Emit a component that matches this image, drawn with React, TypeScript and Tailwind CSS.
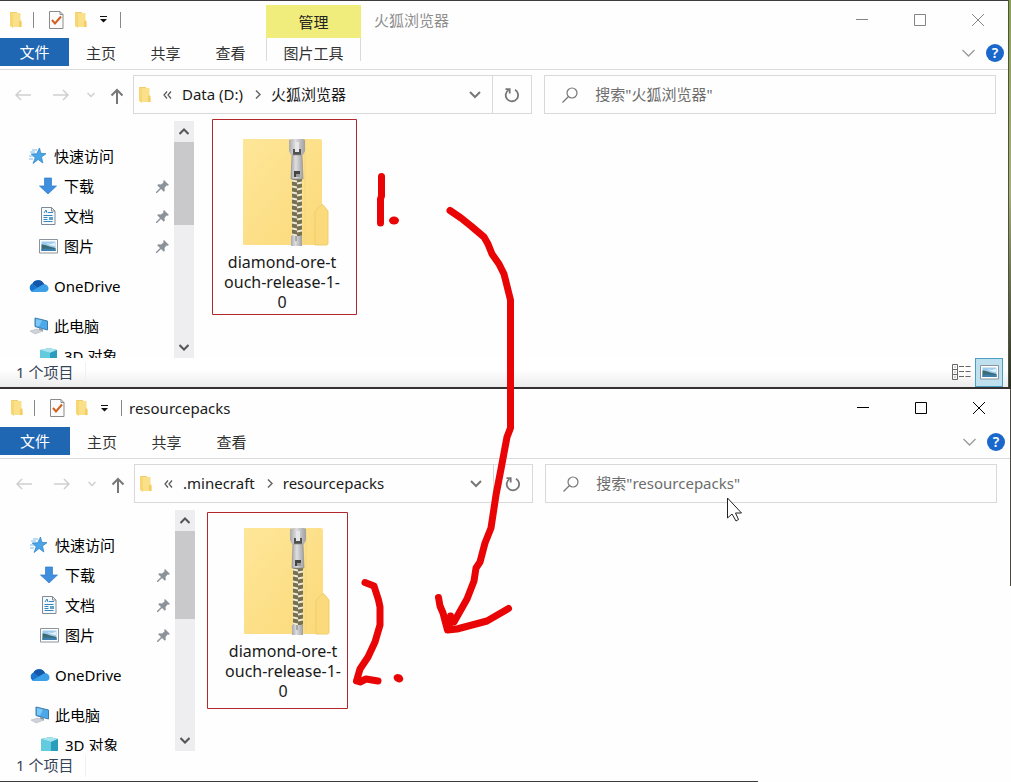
import React from 'react';
import clsx from 'clsx';

interface ExplorerProps {
	active?: boolean;
	title: string;
	crumbs: string[];
	contextTab?: boolean;
}

const FolderIcon = () => (
	<svg width="13" height="18" viewBox="0 0 13 18" aria-hidden="true">
		<path d="M1 1h7v14H1z" fill="#f0cd6c" />
		<path d="M3 2h8.500v9l1 1v4H3z" fill="#fbe08a" />
		<path d="M1 1l3 2v14l-3-2z" fill="#f8d673" />
		<path d="M10 10.500l1.500-1.500 1 1.500V16H10z" fill="#f3cc62" />
	</svg>
);

const CheckDocIcon = () => (
	<svg width="15" height="18" viewBox="0 0 15 18" aria-hidden="true">
		<path d="M.5.5h10.500l3 3v14H.5z" fill="#fbfbfb" stroke="#8b8b8b" />
		<path d="M11 .5v3h3" fill="none" stroke="#8b8b8b" />
		<path d="M3 9l3 3.500L12 5.500" fill="none" stroke="#d2601f" strokeWidth="2" />
	</svg>
);

const Chevron = ({ className = '' }: { className?: string }) => (
	<svg className={className} width="13" height="8" viewBox="0 0 13 8" fill="none" stroke="currentColor" strokeWidth="1.300" aria-hidden="true">
		<path d="M.5 1l6 6 6-6" />
	</svg>
);

const StarIcon = () => (
	<svg width="19" height="18" viewBox="0 0 19 18" aria-hidden="true">
		<path d="M10.500 1l1.300 5.300 5.200.4-4.500 3.300 1.300 6-4.600-3.500L4 16.500l2.200-5.700-4-3.800 5.500-.3z" fill="#48a5e8" stroke="#2b7dc0" strokeWidth=".7" />
		<path d="M3 3h5M1 5h5M0 9h4M0 12h4" stroke="#7cbcec" />
	</svg>
);

const DownloadIcon = () => (
	<svg width="19" height="18" viewBox="0 0 19 18" aria-hidden="true">
		<path d="M5.500 1h7v8h5L9 17 .5 9h5z" fill="#3f8fde" stroke="#2f78c4" strokeWidth=".7" />
	</svg>
);

const DocumentIcon = () => (
	<svg width="19" height="18" viewBox="0 0 19 18" aria-hidden="true">
		<path d="M2.500.5h10l3.500 3.500v13.500H2.500z" fill="#f7fafc" stroke="#7f8a94" />
		<path d="M12.500.5v3.500H16" fill="none" stroke="#7f8a94" />
		<path d="M5 6l2-3 1 3M4.500 8.500h9M4.500 10.500h4M4.500 12.500h4M4.500 14.500h9M9 5.500h5" stroke="#3686bd" fill="none" />
		<path d="M10 10h4v3h-4z" fill="#5ea3cf" />
	</svg>
);

const PictureIcon = () => (
	<svg width="19" height="15" viewBox="0 0 19 15" aria-hidden="true">
		<path d="M.5.5h18v13.500H.5z" fill="#fff" stroke="#8b949c" />
		<path d="M2.500 2.500h14v9.500h-14z" fill="#9ccbed" />
		<path d="M2.500 5.500c4 0 8 2.500 14 3.500V12h-14z" fill="#3c6b74" />
		<path d="M2.500 10c5-1 9 0 14 0V12h-14z" fill="#3d7fae" />
		<path d="M7 4l5 1 4-1.500v3.500l-4-.5z" fill="#e3f1fa" />
	</svg>
);

const CloudIcon = () => (
	<svg width="21" height="14" viewBox="0 0 21 14" aria-hidden="true">
		<path d="M5 13a4.500 4.500 0 0 1-.5-8.500A6.500 6.500 0 0 1 16 5a4.300 4.300 0 0 1 .5 8z" fill="#1976cf" />
		<path d="M4.500 4.500A6.500 6.500 0 0 1 16 5l-6 3.500z" fill="#1558a8" />
		<path d="M3 12.500L14 6c3-2 6.500.5 6.500 3.500 0 2-1.500 3.500-3.500 3.500H5c-1 0-1.500-.2-2-.5z" fill="#3ba0e8" />
	</svg>
);

const ComputerIcon = () => (
	<svg width="20" height="18" viewBox="0 0 20 18" aria-hidden="true">
		<path d="M6 1l12.500 3v9L6 9.500z" fill="#4ba9ea" stroke="#3b7cab" />
		<path d="M7 2l6 1.500-3 6L7 8.800z" fill="#7cc8f6" />
		<path d="M10 11l4 1.500v2l-4-1z" fill="#87929b" />
		<path d="M1 14l7-2 6 2-8 3z" fill="#cdd3d8" stroke="#aab0b6" strokeWidth=".5" />
	</svg>
);

const CubeIcon = () => (
	<svg width="19" height="18" viewBox="0 0 19 18" aria-hidden="true">
		<path d="M1 3l9-2 8 2v12l-8 2-9-2z" fill="#4ab9d2" />
		<path d="M1 3l9-2 8 2-7 3z" fill="#a5e3ee" />
		<path d="M11 6l7-3v12l-7 2z" fill="#2a9cbc" />
		<path d="M1 3l10 3v11L1 15z" fill="#62cbdd" />
	</svg>
);

const PinIcon = () => (
	<svg width="13" height="13" viewBox="0 0 13 13" aria-hidden="true">
		<path d="M8 0l5 5-1.500.8-1-.3L8.500 8l.3 2.800-1 1L5 9l-4 4H0v-1l4-4-2.800-2.800 1-1L5 4.500 7.500 2.500 7.200 1z" fill="#8c9299" />
	</svg>
);

const ZipIcon = () => (
	<svg width="88" height="108" viewBox="0 0 88 108" aria-hidden="true">
		<defs>
			<linearGradient id="zipBody" x1="0" y1="0" x2="1" y2="1">
				<stop offset="0" stopColor="#fee699" />
				<stop offset="1" stopColor="#fbd978" />
			</linearGradient>
			<linearGradient id="zipMetal" x1="0" y1="0" x2="1" y2="0">
				<stop offset="0" stopColor="#a9a9ab" />
				<stop offset=".4" stopColor="#dedee0" />
				<stop offset="1" stopColor="#a0a0a2" />
			</linearGradient>
			<pattern id="zipTeeth" width="10" height="6" patternUnits="userSpaceOnUse" x="50" y="41">
				<path d="M0 0h10v6H0z" fill="#77714f" />
				<path d="M0 .5l5 1v2l-5-1zM5 3.500l5-1v2l-5 1z" fill="#eeebdc" />
			</pattern>
		</defs>
		<path d="M1 2q0-1 1-1h76q2 0 2 2v63l6 7v32q0 2-2 2H2q-1 0-1-1z" fill="url(#zipBody)" />
		<path d="M73 107V75q0-2 2-4l4-4q1-1 2 0l5 6v32q0 2-2 2z" fill="#fbda7b" stroke="#efcd70" />
		<path d="M63 1v106" stroke="#f2d684" />
		<path d="M50 40h10v58H50z" fill="url(#zipTeeth)" />
		<path d="M47 2l4-1h10l2 1v11l-2 4H49l-2-4z" fill="url(#zipMetal)" />
		<path d="M51 11h8v6h-8z" fill="#51514f" />
		<path d="M53 4h4v10h-4z" fill="#e7e7e9" />
		<path d="M50 17h10l1 24H49z" fill="url(#zipMetal)" stroke="#929294" strokeWidth=".7" />
		<path d="M52 33h6v6h-6z" fill="#444" />
		<path d="M54 36h4v3h-4z" fill="#999" />
		<path d="M49 98h11v10H49z" fill="url(#zipMetal)" />
		<path d="M54 98v5" stroke="#777" />
	</svg>
);

const places = [
	{ name: '快速访问', icon: <StarIcon />, child: false, pinned: false, spaced: false },
	{ name: '下载', icon: <DownloadIcon />, child: true, pinned: true, spaced: false },
	{ name: '文档', icon: <DocumentIcon />, child: true, pinned: true, spaced: false },
	{ name: '图片', icon: <PictureIcon />, child: true, pinned: true, spaced: false },
	{ name: 'OneDrive', icon: <CloudIcon />, child: false, pinned: false, spaced: true },
	{ name: '此电脑', icon: <ComputerIcon />, child: false, pinned: false, spaced: true },
	{ name: '3D 对象', icon: <CubeIcon />, child: true, pinned: false, spaced: false },
];

const TitleBar: React.FC<ExplorerProps> = ({ active, title, contextTab }) => (
	<header className={clsx('flex h-[38px]', active ? 'px-px' : 'border-t border-[#3f3a3c]')}>
		<div className="flex w-[121px] shrink-0 items-center pl-[9px]">
			<FolderIcon />
			<span className="ml-[11px] h-4 w-px bg-[#888]" />
			<button aria-label="属性" className="ml-[15px]"><CheckDocIcon /></button>
			<button aria-label="新建文件夹" className="ml-[10px]"><FolderIcon /></button>
			<button aria-label="自定义快速访问工具栏" className="ml-3">
				<svg width="9" height="7" viewBox="0 0 9 7" aria-hidden="true">
					<path d="M1 0h7v1H1zM1 3h7L4.500 6.500z" fill="#111" />
				</svg>
			</button>
			<span className="ml-auto h-4 w-px bg-[#888]" />
		</div>
		{contextTab && (
			<div className="ml-[145px] mt-1 flex w-[95px] items-center justify-center bg-[#f0ed7c] text-[#222]">管理</div>
		)}
		<h1 className={clsx('flex items-center', contextTab ? 'ml-[13px] text-[#8e8e8e]' : 'ml-[7px] text-[#1a1a1a]')}>{title}</h1>
		<div className={clsx('ml-auto flex pr-px', active ? 'text-black' : 'text-[#858585]')}>
			<button aria-label="最小化" className="flex w-[58px] items-center justify-center">
				<svg width="12" height="12" viewBox="0 0 12 12" stroke="currentColor"><path d="M0 5.500h12" /></svg>
			</button>
			<button aria-label="最大化" className="flex w-[58px] items-center justify-center">
				<svg width="12" height="12" viewBox="0 0 12 12" fill="none" stroke="currentColor"><path d="M.5.5h11v11H.5z" /></svg>
			</button>
			<button aria-label="关闭" className="flex w-[58px] items-center justify-center">
				<svg width="12" height="12" viewBox="0 0 12 12" stroke="currentColor"><path d="M0 0l12 12M12 0L0 12" /></svg>
			</button>
		</div>
	</header>
);

const Ribbon: React.FC<{ active?: boolean; contextTab?: boolean }> = ({ active, contextTab }) => (
	<div className={clsx('flex h-8 items-start border-b border-[#dadbdc] text-[#333]', active && 'pr-px')}>
		<button className={clsx('h-7 bg-[#1f66b3] text-white', active ? 'w-[70px]' : 'w-[69px]')}>文件</button>
		<button className="h-[30px] w-16">主页</button>
		<button className="h-[30px] w-[65px]">共享</button>
		<button className="h-[30px] w-[65px]">查看</button>
		{contextTab && (
			<div className="ml-[3px] h-[23px] w-[95px] border-x border-[#dadada]">
				<button className="h-[30px] w-full">图片工具</button>
			</div>
		)}
		<div className="ml-auto flex h-[30px] items-center gap-[11px] pr-1">
			<button aria-label="展开功能区"><Chevron className="text-[#9a9a9a]" /></button>
			<button aria-label="帮助" className="flex size-[18px] items-center justify-center rounded-full bg-[#1b68cc] text-sm font-semibold text-white">?</button>
		</div>
	</div>
);

const NavBar: React.FC<ExplorerProps> = ({ active, title, crumbs }) => (
	<div className={clsx('flex pt-[5px] pb-[7px]', active && 'px-px')}>
		<div className="flex w-[133px] shrink-0 pl-1">
			<button aria-label="后退" className="flex w-[38px] items-center justify-center text-[#cfcfcf]">
				<svg width="16" height="12" viewBox="0 0 16 12" fill="none" stroke="currentColor" strokeWidth="1.500"><path d="M16 6H1M6 1L1 6l5 5" /></svg>
			</button>
			<button aria-label="前进" className="flex w-[38px] items-center justify-center text-[#cfcfcf]">
				<svg width="16" height="12" viewBox="0 0 16 12" fill="none" stroke="currentColor" strokeWidth="1.500"><path d="M0 6h15M10 1l5 5-5 5" /></svg>
			</button>
			<button aria-label="最近浏览的位置" className="flex w-[22px] items-center justify-center text-[#cfcfcf]">
				<svg width="8" height="6" viewBox="0 0 8 6" fill="none" stroke="currentColor" strokeWidth="1.500"><path d="M.5 1L4 4.500 7.500 1" /></svg>
			</button>
			<button aria-label="上移" className="flex w-[30px] items-center justify-center pt-[2px] text-[#777]">
				<svg width="14" height="16" viewBox="0 0 14 16" fill="none" stroke="currentColor" strokeWidth="2"><path d="M7 16V2M1.500 7.500L7 2l5.500 5.500" /></svg>
			</button>
		</div>
		<nav aria-label="地址" className="flex h-[39px] flex-10 items-center border border-[#d9d9d9] pl-1 text-[#1a1a1a]">
			<FolderIcon />
			<svg className="ml-3" width="9" height="8" viewBox="0 0 9 8" fill="none" stroke="#555" strokeWidth="1.200" aria-hidden="true">
				<path d="M4 .5L1 4l3 3.500M8 .5L5 4l3 3.500" />
			</svg>
			{crumbs.map((crumb, i) => (
				<React.Fragment key={crumb}>
					{i > 0 && (
						<svg className="ml-3" width="6" height="9" viewBox="0 0 6 9" fill="none" stroke="#666" strokeWidth="1.500" aria-hidden="true">
							<path d="M1 .5l4 4-4 4" />
						</svg>
					)}
					<a href="#" className="ml-[10px] pb-[2px] whitespace-nowrap">{crumb}</a>
				</React.Fragment>
			))}
			<button aria-label="以前的位置" className="ml-auto flex w-[35px] justify-center">
				<svg width="12" height="8" viewBox="0 0 12 8" fill="none" stroke="#777" strokeWidth="2" aria-hidden="true"><path d="M1 1l5 5 5-5" /></svg>
			</button>
			<button aria-label="刷新" className="flex h-full w-[39px] items-center justify-center border-l border-[#d9d9d9]">
				<svg width="16" height="16" viewBox="0 0 16 16" fill="none" stroke="#777" strokeWidth="1.800" aria-hidden="true">
					<path d="M11 2.700a6.200 6.200 0 1 1-6.500.2" />
					<path d="M1.500 2.200H5.700v4.200" />
				</svg>
			</button>
		</nav>
		<label className="mr-3 ml-3 flex h-[39px] flex-11 items-center border border-[#d9d9d9] pl-[17px]">
			<svg width="16" height="16" viewBox="0 0 16 16" fill="none" stroke="#777" strokeWidth="1.200" aria-hidden="true">
				<circle cx="10" cy="6" r="5" />
				<path d="M6.500 9.500L.5 15.500" />
			</svg>
			<input
				type="text"
				aria-label="搜索"
				placeholder={`搜索"${title}"`}
				className="ml-[17px] min-w-0 flex-1 bg-transparent pb-[2px] outline-none placeholder:text-[#6d6d6d]"
			/>
		</label>
	</div>
);

const Explorer: React.FC<ExplorerProps> = (props) => {
	const { active, contextTab } = props;
	return (
		<section className="min-w-0 flex-1 bg-[#fefefe]">
			<TitleBar {...props} />
			<Ribbon active={active} contextTab={contextTab} />
			<NavBar {...props} />
			<div className={clsx('flex', active ? 'h-[241px] px-px' : 'h-[237px]')}>
				<ul className="w-[174px] shrink-0 overflow-hidden pt-5 text-black">
					{places.map((place) => (
						<li key={place.name} className={clsx(place.spaced && 'mt-[10px]')}>
							<a href="#" className={clsx('flex h-[30px] items-center pr-[5px]', place.child ? 'pl-[38px]' : 'pl-7')}>
								<span className="flex w-[21px] justify-center">{place.icon}</span>
								<span className="ml-[5px]">{place.name}</span>
								{place.pinned && <span className="ml-auto"><PinIcon /></span>}
							</a>
						</li>
					))}
				</ul>
				<div className="flex w-5 shrink-0 flex-col items-center bg-[#eeedef]">
					<button aria-label="向上滚动" className="flex h-[21px] w-full shrink-0 items-center justify-center">
						<svg width="10" height="7" viewBox="0 0 10 7" fill="none" stroke="#555" strokeWidth="2"><path d="M.5 6L5 1.500 9.500 6" /></svg>
					</button>
					<div className={clsx('w-full bg-[#c9c8ca]', active ? 'h-[88px]' : 'h-[83px]')} />
					<button aria-label="向下滚动" className="mt-auto flex h-[21px] w-full shrink-0 items-center justify-center">
						<svg width="10" height="7" viewBox="0 0 10 7" fill="none" stroke="#555" strokeWidth="2"><path d="M.5 1L5 5.500 9.500 1" /></svg>
					</button>
				</div>
				<main className="flex-1 pt-[17px] pl-[26px]">
					<button className="flex w-[124px] flex-col items-center text-base leading-5 text-[#1a1a1a]">
						<span className="pl-2"><ZipIcon /></span>
						<span className="mt-[6px]">diamond-ore-t</span>
						<span>ouch-release-1-</span>
						<span>0</span>
					</button>
				</main>
			</div>
			<footer
				className={clsx(
					'flex items-center pl-4 text-[#36445a]',
					active ? 'h-[30px]' : 'h-[29px] bg-linear-to-b from-white from-40% to-[#ececec]'
				)}
			>
				<span className="border-r border-[#f0f0f0] pr-3 pb-[2px]">1 个项目</span>
				{!active && (
					<div className="ml-auto flex h-full pr-[5px]">
						<button aria-label="详细信息" className="flex w-7 items-center justify-center">
							<svg width="19" height="17" viewBox="0 0 19 17" fill="none" stroke="#666" aria-hidden="true">
								<path d="M.5.500h5v5h-5zM.5 5.500h5v5h-5zM.5 10.500h5v5h-5z" />
								<path d="M2.500 3h1M2.500 8h1M2.500 13h1M7 2.500h5M13.500 2.500h5M7 7.500h5M13.500 7.500h5M7 12.500h5M13.500 12.500h5" />
							</svg>
						</button>
						<button aria-label="大缩略图" className="flex w-7 items-center justify-center border border-[#4c9fc0] bg-[#bfe0ee]">
							<PictureIcon />
						</button>
					</div>
				)}
			</footer>
		</section>
	);
};

// Hand-drawn marks and the mouse pointer, laid over both windows
const Markup = () => (
	<svg className="pointer-events-none absolute top-0 left-0" width="1011" height="782" viewBox="0 0 1011 782" fill="none" aria-hidden="true">
		<g stroke="#b3282d">
			<path d="M212.500 119.500h144v195h-144z" />
			<path d="M207.500 512.500h140v196h-140z" />
		</g>
		<g stroke="#e90505" strokeWidth="7" strokeLinecap="round" strokeLinejoin="round">
			<path d="M381.500 176.500V196L380.500 199V223" />
			<path d="M450 210.500L461 218L471 226L484 237L488 244L492 254L499 264L504 274L507 286L510.500 300V428L507 437L501 469L496 495L491 528L485 543L480 562L476 568L474 581L467 599L454 622" />
			<path d="M438.500 597.500L440 606L443 613L447.500 630L457 629L487 621L508.500 608.500M450.500 616L449 628" />
			<path d="M365 582.500L374 586L378.500 600L380 607V625L375 642L368 657L360 669L356.500 681L360 682L366 679L378 681" />
		</g>
		<ellipse cx="394" cy="220.500" rx="5" ry="4" fill="#e90505" />
		<ellipse cx="398.500" cy="678" rx="5" ry="4" transform="rotate(25 398 678)" fill="#e90505" />
		<path d="M727.500 498v20l4.500-4 4 7 2.500-1.500-3-6.500h6z" fill="#fff" stroke="#222" />
	</svg>
);

export default function App() {
	return (
		<div className="relative min-h-screen bg-[#fefefe] font-['Noto_Sans','Noto_Sans_CJK_SC',sans-serif] text-[15px] leading-5">
			<div className="flex">
				<Explorer title="火狐浏览器" crumbs={['Data (D:)', '火狐浏览器']} contextTab />
				<div className="w-[3px] border-l border-[#4c5146] bg-linear-to-b from-[#8ba052] via-[#a5ae74] to-[#292e22]" />
			</div>
			<div className="h-[2px] bg-[#33302f]" />
			<div className="flex">
				<Explorer title="resourcepacks" crumbs={['.minecraft', 'resourcepacks']} active />
				<div className="h-[197px] w-px bg-[#4a4a42]" />
			</div>
			<div className="h-px w-3/4 bg-[#3c3c3c]" />
			<Markup />
		</div>
	);
}
